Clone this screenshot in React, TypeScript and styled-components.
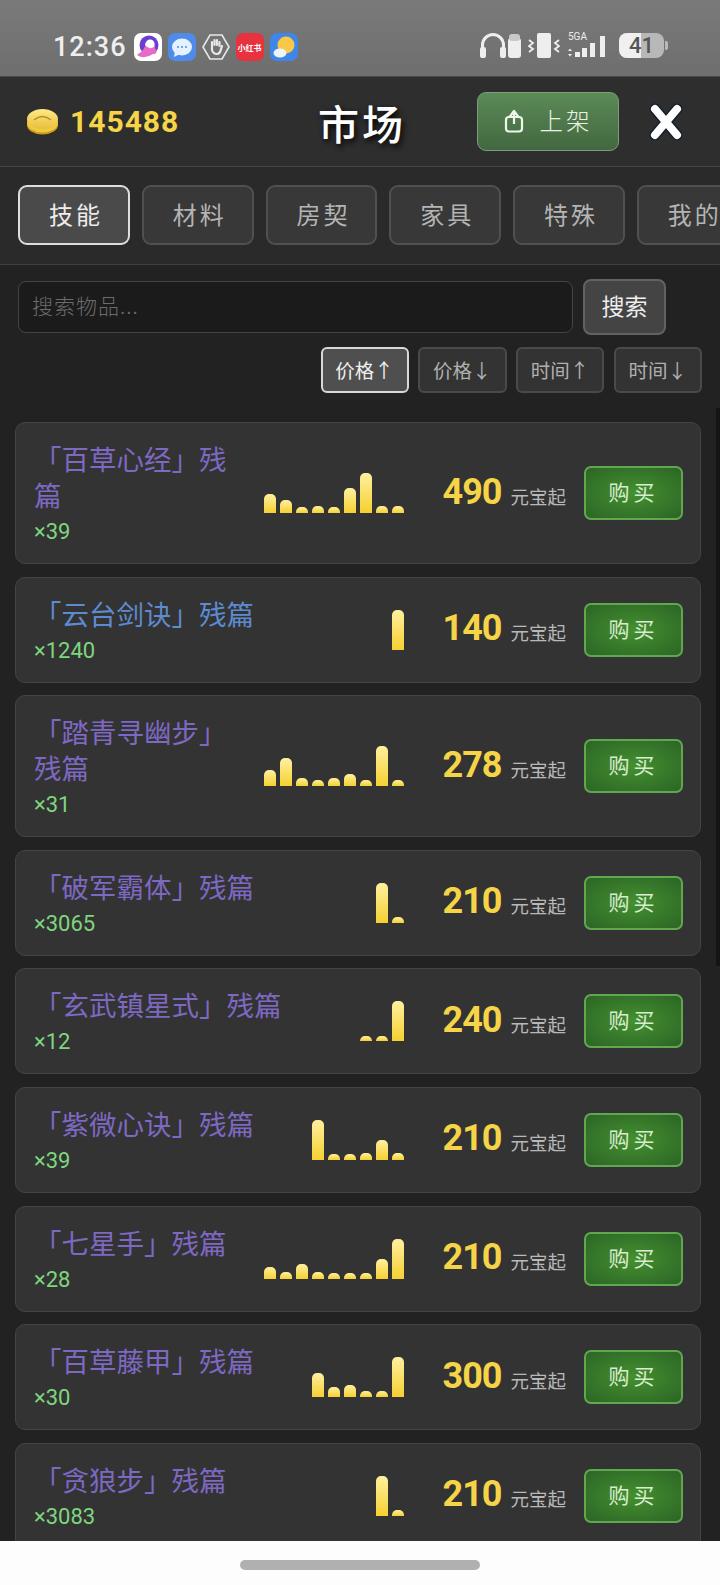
import styled, { createGlobalStyle } from 'styled-components';

const GlobalStyle = createGlobalStyle`
  html, body {
    margin: 0;
    padding: 0;
    background: #222;
  }
  * {
    box-sizing: border-box;
  }
`;

const cjk = `"Noto Sans CJK SC", "Noto Sans", sans-serif`;

const tabs = ['技能', '材料', '房契', '家具', '特殊', '我的上架'];
const sorts = ['价格↑', '价格↓', '时间↑', '时间↓'];

const items = [
  { name: '「百草心经」残篇', count: 39, price: 490, bars: [19, 13, 6, 7, 6, 25, 40, 7, 7], color: '#7d68c2' },
  { name: '「云台剑诀」残篇', count: 1240, price: 140, bars: [40], color: '#5d8bd0' },
  { name: '「踏青寻幽步」残篇', count: 31, price: 278, bars: [16, 28, 8, 6, 8, 12, 6, 40, 6], color: '#7d68c2' },
  { name: '「破军霸体」残篇', count: 3065, price: 210, bars: [40, 6], color: '#7d68c2' },
  { name: '「玄武镇星式」残篇', count: 12, price: 240, bars: [5, 5, 40], color: '#7d68c2' },
  { name: '「紫微心诀」残篇', count: 39, price: 210, bars: [40, 6, 6, 7, 20, 7], color: '#7d68c2' },
  { name: '「七星手」残篇', count: 28, price: 210, bars: [12, 7, 15, 7, 6, 6, 6, 20, 40], color: '#7d68c2' },
  { name: '「百草藤甲」残篇', count: 30, price: 300, bars: [24, 10, 12, 6, 6, 40], color: '#7d68c2' },
  { name: '「贪狼步」残篇', count: 3083, price: 210, bars: [40, 6], color: '#7d68c2' },
];

const Coin = () => (
  <svg width="33" height="27" viewBox="0 0 33 27">
    <defs>
      <linearGradient id="coinG" x1="0" y1="0" x2="0" y2="1">
        <stop offset="0" stopColor="#ffe98a" />
        <stop offset="1" stopColor="#e8bf3a" />
      </linearGradient>
    </defs>
    <ellipse cx="16.5" cy="17" rx="15.5" ry="9.5" fill="#c99a1e" />
    <ellipse cx="16.5" cy="15" rx="15.5" ry="9.5" fill="#f0c93f" />
    <ellipse cx="16.5" cy="11" rx="15.5" ry="10" fill="url(#coinG)" />
    <path d="M8 12 Q16.5 5 25 12" fill="none" stroke="#b78d1c" strokeWidth="1.6" />
  </svg>
);

const AppIcons = () => (
  <>
    <svg width="28" height="28" viewBox="0 0 28 28">
      <rect width="28" height="28" rx="7" fill="#fff" />
      <circle cx="15" cy="12" r="9.5" fill="#6a3fd0" />
      <path d="M3 22 Q11 17 12 10 Q22 6 21 15 Q25 21 19 21 Q10 27 3 22Z" fill="#e86ac8" />
      <path d="M11 12 Q12 6 17 6.5 Q22 8 20 14 Q15 17 11 12Z" fill="#fff" />
    </svg>
    <svg width="28" height="28" viewBox="0 0 28 28">
      <rect width="28" height="28" rx="7" fill="#4f8be8" />
      <ellipse cx="14" cy="14" rx="10" ry="8.5" fill="#e6f1ff" />
      <path d="M7 18 L6 24 L12 21Z" fill="#e6f1ff" />
      <circle cx="10" cy="14" r="1" fill="#4f8be8" />
      <circle cx="14" cy="14" r="1" fill="#4f8be8" />
      <circle cx="18" cy="14" r="1" fill="#4f8be8" />
    </svg>
    <svg width="28" height="28" viewBox="0 0 28 28">
      <path d="M8 2 H20 L27 14 L20 26 H8 L1 14Z" fill="none" stroke="#e8e8e8" strokeWidth="1.6" />
      <path d="M10 13 V9 M12.5 12 V7 M15 12 V7 M17.5 13 V9 M10 13 V17 Q11 21 15 21 Q18 21 19 16 L20 13" fill="none" stroke="#e8e8e8" strokeWidth="2.2" strokeLinecap="round" />
    </svg>
    <RedBook>小红书</RedBook>
    <svg width="28" height="28" viewBox="0 0 28 28">
      <rect width="28" height="28" rx="7" fill="#3f86e8" />
      <circle cx="16" cy="12" r="8.5" fill="#f9c846" />
      <ellipse cx="10" cy="20" rx="6.5" ry="4.5" fill="#eef3f8" />
    </svg>
  </>
);

const StatusRight = () => (
  <>
    <svg width="41" height="26" viewBox="0 0 41 26">
      <path d="M2.5 20 V12 a10.5 10.5 0 0 1 21 0 V20" fill="none" stroke="#eee" strokeWidth="3" />
      <rect x="0" y="14" width="6" height="11" rx="2" fill="#eee" />
      <rect x="20" y="14" width="6" height="11" rx="2" fill="#eee" />
      <rect x="28" y="5" width="13" height="20" rx="3" fill="#eee" />
      <rect x="29" y="1" width="11" height="7" rx="3" fill="#c8c8c8" />
    </svg>
    <svg width="32" height="25" viewBox="0 0 32 25">
      <rect x="9" y="0" width="14" height="25" rx="2" fill="#eee" />
      <path d="M1 7 L5 10 L1 13 L5 16 L1 19 M31 7 L27 10 L31 13 L27 16 L31 19" fill="none" stroke="#eee" strokeWidth="1.8" />
    </svg>
    <Signal>
      <SignalLabel>5GA</SignalLabel>
      <svg width="42" height="22" viewBox="0 0 42 22">
        <rect x="8" y="16" width="5" height="5" fill="#eee" />
        <rect x="15" y="12" width="5" height="9" fill="#eee" />
        <rect x="23" y="7" width="5" height="14" fill="#eee" />
        <rect x="33" y="0" width="5" height="21" fill="#eee" />
        <path d="M1 15 L3 12.5 L5 15Z M1 18 L3 20.5 L5 18Z" fill="#eee" />
      </svg>
    </Signal>
    <Battery>
      <BatteryFill />
      <BatteryText>41</BatteryText>
      <BatteryTip />
    </Battery>
  </>
);

const UploadIcon = () => (
  <svg width="20" height="25" viewBox="0 0 20 25">
    <rect x="2" y="9" width="16" height="14.5" rx="3" fill="none" stroke="#eef5ea" strokeWidth="2.2" />
    <path d="M5.5 9 L10 3 L14.5 9Z" fill="none" stroke="#eef5ea" strokeWidth="2.2" strokeLinejoin="round" />
    <path d="M10 5 V16" fill="none" stroke="#eef5ea" strokeWidth="2.2" />
  </svg>
);

const CloseIcon = () => (
  <svg width="36" height="38" viewBox="0 0 36 38">
    <path d="M7 6 L29 32 M29 6 L7 32" stroke="#12202e" strokeWidth="11" strokeLinecap="round" />
    <path d="M7 6 L29 32 M29 6 L7 32" stroke="#fff" strokeWidth="8" strokeLinecap="round" />
  </svg>
);

const App = () => {
  return (
    <>
      <GlobalStyle />
      <Page>
        <StatusBar>
          <StatusLeft>
            <Clock>12:36</Clock>
            <AppIcons />
          </StatusLeft>
          <StatusIcons>
            <StatusRight />
          </StatusIcons>
        </StatusBar>
        <Header>
          <Balance>
            <Coin />
            <BalanceText>145488</BalanceText>
          </Balance>
          <Title>市场</Title>
          <HeaderRight>
            <ListButton>
              <UploadIcon />
              上架
            </ListButton>
            <CloseButton>
              <CloseIcon />
            </CloseButton>
          </HeaderRight>
        </Header>
        <TabBar>
          {tabs.map((t, i) => (
            <Tab key={t} active={i === 0}>
              {t}
            </Tab>
          ))}
        </TabBar>
        <SearchPanel>
          <SearchRow>
            <SearchInput placeholder="搜索物品..." readOnly />
            <SearchButton>搜索</SearchButton>
          </SearchRow>
          <SortRow>
            {sorts.map((s, i) => (
              <SortButton key={s} active={i === 0}>
                {s}
              </SortButton>
            ))}
          </SortRow>
        </SearchPanel>
        <List>
          <ScrollThumb />
          {items.map((item, idx) => (
            <Card key={idx}>
              <NameCol>
                <Name color={item.color}>{item.name}</Name>
                <Count>×{item.count}</Count>
              </NameCol>
              <Bars>
                {item.bars.map((b, i) => (
                  <Bar key={i} style={{ height: b }} />
                ))}
              </Bars>
              <PriceBox>
                <Price>{item.price}</Price>
                <Unit>元宝起</Unit>
              </PriceBox>
              <BuyButton>购买</BuyButton>
            </Card>
          ))}
        </List>
        <NavBar>
          <HomeBar />
        </NavBar>
      </Page>
    </>
  );
};

const Page = styled.div`
  width: 720px;
  height: 1585px;
  display: flex;
  flex-direction: column;
  overflow: hidden;
  background: #222;
  font-family: ${cjk};
`;

const StatusBar = styled.div`
  flex: 0 0 77px;
  background: linear-gradient(#7a7a7a, #6e6e6e);
  border-bottom: 1px solid #4a4a4a;
  display: flex;
  align-items: flex-start;
  justify-content: space-between;
  padding: 33px 56px 0 53px;
`;

const StatusLeft = styled.div`
  display: flex;
  align-items: center;
  gap: 6px;
`;

const Clock = styled.div`
  font-family: Roboto, sans-serif;
  font-size: 27px;
  line-height: 28px;
  font-weight: 500;
  color: #eee;
  letter-spacing: 1px;
  margin-right: 1px;
`;

const RedBook = styled.div`
  width: 28px;
  height: 28px;
  border-radius: 7px;
  background: #e8323f;
  color: #fff;
  font-size: 8px;
  font-weight: 700;
  white-space: nowrap;
  display: flex;
  align-items: center;
  justify-content: center;
`;

const StatusIcons = styled.div`
  display: flex;
  align-items: flex-start;
  gap: 7px;
`;

const Signal = styled.div`
  position: relative;
  width: 42px;
  height: 25px;
  display: flex;
  align-items: flex-end;
`;

const SignalLabel = styled.div`
  position: absolute;
  left: 1px;
  top: -2px;
  font-family: Roboto, sans-serif;
  font-size: 10px;
  line-height: 12px;
  color: #eee;
`;

const Battery = styled.div`
  position: relative;
  width: 45px;
  height: 25px;
  margin-left: 3px;
  border-radius: 8px;
  background: #b8b8b8;
`;

const BatteryFill = styled.div`
  width: 22px;
  height: 100%;
  border-radius: 8px 0 0 8px;
  background: #f0f0f0;
`;

const BatteryText = styled.div`
  position: absolute;
  inset: 0;
  display: flex;
  align-items: center;
  justify-content: center;
  font-family: Roboto, sans-serif;
  font-size: 22px;
  font-weight: 500;
  color: #555;
`;

const BatteryTip = styled.div`
  position: absolute;
  right: -4px;
  top: 8px;
  width: 3px;
  height: 9px;
  border-radius: 0 2px 2px 0;
  background: #b8b8b8;
`;

const Header = styled.div`
  flex: 0 0 90px;
  background: #2e2e2e;
  border-bottom: 1px solid #454545;
  display: grid;
  grid-template-columns: 1fr auto 1fr;
  align-items: center;
  padding: 0 36px 0 26px;
`;

const Balance = styled.div`
  display: flex;
  align-items: center;
  gap: 11px;
`;

const BalanceText = styled.div`
  font-family: Roboto, sans-serif;
  font-size: 30px;
  font-weight: 700;
  letter-spacing: 1px;
  color: #f5d547;
`;

const Title = styled.div`
  margin-left: 14px;
  font-size: 41px;
  font-weight: 500;
  letter-spacing: 3px;
  line-height: 54px;
  color: #fff;
  text-shadow: 2px 3px 6px #000;
`;

const HeaderRight = styled.div`
  display: flex;
  align-items: center;
  justify-content: flex-end;
  gap: 29px;
`;

const ListButton = styled.button`
  width: 142px;
  height: 59px;
  padding: 0 0 3px;
  border: 1px solid #7d9c78;
  border-radius: 9px;
  background: linear-gradient(#5c8a58, #42683f);
  color: #e8f2e4;
  font-family: ${cjk};
  font-size: 23.5px;
  font-weight: 300;
  letter-spacing: 3px;
  display: flex;
  align-items: center;
  justify-content: center;
  gap: 16px;
`;

const CloseButton = styled.div`
  display: flex;
`;

const TabBar = styled.div`
  flex: 0 0 98px;
  background: #2a2a2a;
  border-bottom: 1px solid #3f3f3f;
  display: flex;
  align-items: flex-start;
  gap: 12px;
  padding: 18px 0 0 18px;
  overflow: hidden;
`;

const Tab = styled.div<{ active?: boolean }>`
  flex: 0 0 111.75px;
  height: 60px;
  border: ${({ active }) => (active ? '2px solid #dedede' : '2px solid #505050')};
  border-radius: 9px;
  background: ${({ active }) => (active ? '#4a4a4a' : '#383838')};
  color: ${({ active }) => (active ? '#ececec' : '#b4b4b4')};
  font-size: 24px;
  letter-spacing: 3px;
  white-space: nowrap;
  overflow: hidden;
  display: flex;
  align-items: center;
  justify-content: flex-start;
  padding: 0 0 3px 29px;
`;

const SearchPanel = styled.div`
  flex: 0 0 143px;
  background: #222;
  padding: 14px 18px 0;
`;

const SearchRow = styled.div`
  display: flex;
  align-items: center;
  gap: 10px;
`;

const SearchInput = styled.input`
  width: 555px;
  height: 52px;
  border: 1px solid #444;
  border-radius: 8px;
  background: #1b1b1b;
  padding: 0 13px 4px;
  color: #ccc;
  font-family: ${cjk};
  font-size: 21px;
  font-weight: 300;
  letter-spacing: 1px;
  outline: none;

  &::placeholder {
    color: #6c6c6c;
    opacity: 1;
  }
`;

const SearchButton = styled.button`
  width: 83px;
  height: 56px;
  padding: 0 0 4px;
  border: 2px solid #626262;
  border-radius: 8px;
  background: #444;
  color: #eee;
  font-family: ${cjk};
  font-size: 23px;
`;

const SortRow = styled.div`
  display: flex;
  justify-content: flex-end;
  gap: 9.5px;
  margin-top: 12px;
`;

const SortButton = styled.button<{ active?: boolean }>`
  width: 88.25px;
  height: 46px;
  padding: 0 0 2px;
  border: ${({ active }) => (active ? '2px solid #d8d8d8' : '2px solid #4a4a4a')};
  border-radius: 6px;
  background: ${({ active }) => (active ? '#4f4f4f' : '#333')};
  color: ${({ active }) => (active ? '#f0f0f0' : '#b0b0b0')};
  font-family: ${cjk};
  font-size: 19.5px;
`;

const List = styled.div`
  flex: 1;
  min-height: 0;
  position: relative;
  overflow: hidden;
  background: #222;
  padding: 14px 19px 0 15px;
  display: flex;
  flex-direction: column;
  gap: 12.6px;
`;

const ScrollThumb = styled.div`
  position: absolute;
  right: 0;
  top: 0;
  width: 4px;
  height: 558px;
  background: #151515;
`;

const Card = styled.div`
  flex: 0 0 auto;
  border: 1px solid #444;
  border-radius: 10px;
  background: #333;
  padding: 17px 17px 17px 18px;
  display: flex;
  align-items: center;
`;

const NameCol = styled.div`
  flex: 1;
  min-width: 0;
  padding-right: 16px;
`;

const Name = styled.div<{ color: string }>`
  color: ${({ color }) => color};
  font-size: 27.5px;
  line-height: 36px;
`;

const Count = styled.div`
  margin-top: 6px;
  color: #7ed67e;
  font-family: Roboto, sans-serif;
  font-size: 22px;
  line-height: 28px;
`;

const Bars = styled.div`
  display: flex;
  align-items: flex-end;
  gap: 4px;
  flex: 0 0 auto;
  margin-right: 39px;
  height: 40px;
`;

const Bar = styled.div`
  width: 12px;
  border-radius: 5px 5px 0 0;
  background: linear-gradient(#fff0a0, #f5d030);
`;

const PriceBox = styled.div`
  display: flex;
  align-items: baseline;
  gap: 9px;
  flex: 0 0 auto;
  margin: 0 18px 3px 0;
`;

const Price = styled.div`
  font-family: Roboto, sans-serif;
  font-size: 36px;
  font-weight: 700;
  letter-spacing: -1px;
  color: #f5d547;
`;

const Unit = styled.div`
  font-size: 18.5px;
  color: #b8b8b8;
`;

const BuyButton = styled.button`
  flex: 0 0 99px;
  height: 54px;
  padding: 0 0 4px;
  border: 2px solid #5fa84f;
  border-radius: 7px;
  background: radial-gradient(ellipse at center, #44902f, #2c6526);
  color: #d8ecd0;
  font-family: ${cjk};
  font-size: 21px;
  letter-spacing: 4px;
`;

const NavBar = styled.div`
  flex: 0 0 44px;
  background: #fdfdfd;
  position: relative;
  display: flex;
  justify-content: center;
  padding-top: 19px;
`;

const HomeBar = styled.div`
  width: 240px;
  height: 10px;
  border-radius: 5px;
  background: #b0b0b0;
`;

export default App;
